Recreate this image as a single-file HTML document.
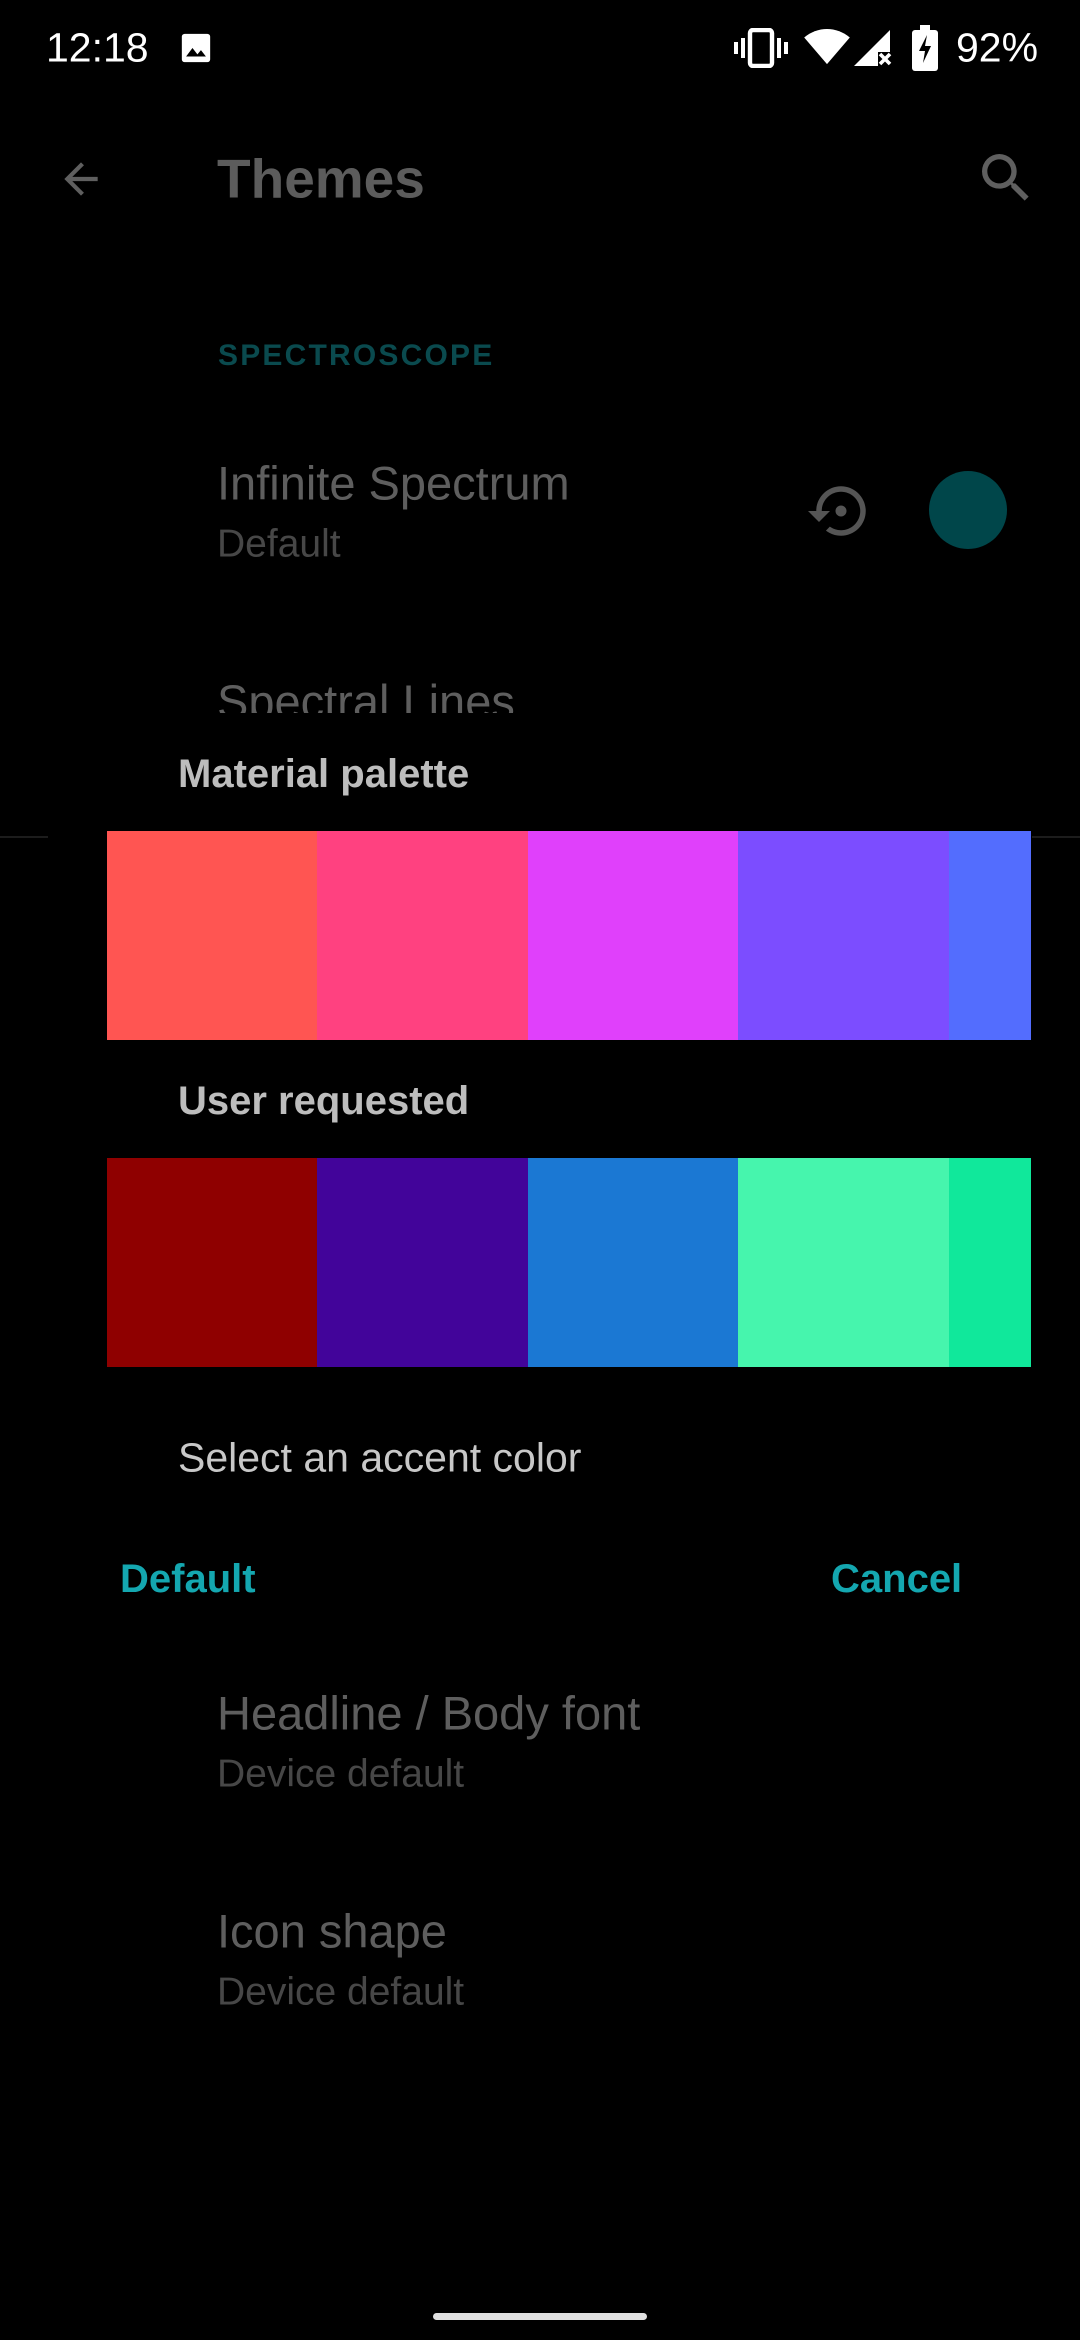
<!DOCTYPE html>
<html><head><meta charset="utf-8"><style>
html,body{margin:0;padding:0;background:#000;width:1080px;height:2340px;overflow:hidden;position:relative;font-family:"Liberation Sans",sans-serif}
.t{position:absolute;white-space:nowrap;line-height:1;transform:translateY(-50%)}
.sw{position:absolute;height:100%;top:0}
</style></head><body>
<!-- status bar -->
<div class="t" style="left:46px;top:48px;font-size:41px;color:#fff">12:18</div>
<svg style="position:absolute;left:178px;top:31px" width="36" height="34" viewBox="0 0 24 24"><rect x="2" y="2" width="20" height="20" rx="2" fill="#fff"/><path d="M5 18l4.5-6 3.5 4.5 2.5-3 3.5 4.5z" fill="#000"/></svg>
<svg style="position:absolute;left:734px;top:28px" width="54" height="40" viewBox="0 0 27 20"><rect x="8" y="1" width="11" height="18" rx="1.5" fill="none" stroke="#fff" stroke-width="2.2"/><rect x="3.5" y="5" width="2" height="10" fill="#fff"/><rect x="21.5" y="5" width="2" height="10" fill="#fff"/><rect x="0" y="7" width="2" height="6" fill="#fff"/><rect x="25" y="7" width="2" height="6" fill="#fff"/></svg>
<svg style="position:absolute;left:804px;top:28px" width="46" height="38" viewBox="0 0 24 20"><path d="M12 19L0 5C7-1 17-1 24 5z" fill="#fff"/></svg>
<svg style="position:absolute;left:852px;top:28px" width="40" height="40" viewBox="0 0 20 20"><path d="M19 1V12H13V19H1z" fill="#fff"/><path d="M14 13l5 5M19 13l-5 5" stroke="#fff" stroke-width="1.8"/></svg>
<svg style="position:absolute;left:912px;top:25px" width="26" height="46" viewBox="0 0 13 23"><rect x="4" y="0" width="5" height="3" fill="#fff"/><rect x="0" y="2.5" width="13" height="20.5" rx="1.5" fill="#fff"/><path d="M7.5 5L3.5 13H6.5L5.5 19L9.5 10.5H6.5z" fill="#000"/></svg>
<div class="t" style="left:956px;top:48px;font-size:41px;color:#fff">92%</div>
<!-- toolbar -->
<svg style="position:absolute;left:56px;top:154px" width="50" height="50" viewBox="0 0 24 24"><path d="M20 11H7.83l5.59-5.59L12 4l-8 8 8 8 1.41-1.41L7.83 13H20z" fill="#5f5f5f"/></svg>
<div class="t" style="left:217px;top:179px;font-size:55px;font-weight:bold;color:#5c5c5c">Themes</div>
<svg style="position:absolute;left:974px;top:146px" width="64" height="64" viewBox="0 0 24 24"><path d="M15.5 14h-.79l-.28-.27A6.47 6.47 0 0 0 16 9.5 6.5 6.5 0 1 0 9.5 16c1.61 0 3.09-.59 4.230-1.57l.27.28v.79l5 4.99L20.49 19l-4.99-5zm-6 0C7.01 14 5 11.99 5 9.5S7.01 5 9.5 5 14 7.01 14 9.5 11.99 14 9.5 14z" fill="#5f5f5f"/></svg>
<div class="t" style="left:218px;top:356px;font-size:30px;font-weight:bold;color:#0a4a4e;letter-spacing:2.2px">SPECTROSCOPE</div>
<div class="t" style="left:217px;top:483px;font-size:47px;color:#5e5e5e">Infinite Spectrum</div>
<div class="t" style="left:217px;top:544px;font-size:39px;color:#474747">Default</div>
<svg style="position:absolute;left:808px;top:478px" width="66" height="66" viewBox="0 0 24 24"><path d="M14 12c0-1.1-.9-2-2-2s-2 .9-2 2 .9 2 2 2 2-.9 2-2zm-2-9c-4.97 0-9 4.030-9 9H0l4 4 4-4H5c0-3.87 3.13-7 7-7s7 3.13 7 7-3.13 7-7 7c-1.51 0-2.91-.49-4.06-1.3l-1.42 1.44C8.04 20.3 9.94 21 12 21c4.97 0 9-4.03 9-9s-4.03-9-9-9z" fill="#555"/></svg>
<div style="position:absolute;left:929px;top:471px;width:78px;height:78px;border-radius:50%;background:#00464a"></div>
<div style="position:absolute;left:0;top:600px;width:1080px;height:113px;overflow:hidden"><div class="t" style="left:217px;top:78px;font-size:47px;color:#5e5e5e;transform:none">Spectral Lines</div></div>
<div style="position:absolute;left:0;top:836px;width:1080px;height:2px;background:#1c1c1c"></div>
<!-- dialog -->
<div style="position:absolute;left:48px;top:716px;width:984px;height:880px;background:#000"></div>
<div class="t" style="left:178px;top:774px;font-size:40px;font-weight:bold;color:#bdbdbd">Material palette</div>
<div style="position:absolute;left:107px;top:831px;width:924px;height:209px;overflow:hidden">
<div class="sw" style="left:0;width:210px;background:#ff5552"></div>
<div class="sw" style="left:210px;width:211px;background:#ff4180"></div>
<div class="sw" style="left:421px;width:210px;background:#e040fb"></div>
<div class="sw" style="left:631px;width:211px;background:#7c4dff"></div>
<div class="sw" style="left:842px;width:82px;background:#536dfe"></div></div>
<div class="t" style="left:178px;top:1101px;font-size:40px;font-weight:bold;color:#bdbdbd">User requested</div>
<div style="position:absolute;left:107px;top:1158px;width:924px;height:209px;overflow:hidden">
<div class="sw" style="left:0;width:210px;background:#8f0000"></div>
<div class="sw" style="left:210px;width:211px;background:#42049a"></div>
<div class="sw" style="left:421px;width:210px;background:#1b78d3"></div>
<div class="sw" style="left:631px;width:211px;background:#46f5ad"></div>
<div class="sw" style="left:842px;width:82px;background:#10e89b"></div></div>
<div class="t" style="left:178px;top:1458px;font-size:41px;color:#c8c8c8">Select an accent color</div>
<div class="t" style="left:120px;top:1579px;font-size:40px;font-weight:bold;color:#14a7b0">Default</div>
<div class="t" style="left:831px;top:1579px;font-size:40px;font-weight:bold;color:#14a7b0">Cancel</div>
<!-- below -->
<div class="t" style="left:217px;top:1713px;font-size:47px;color:#5e5e5e">Headline / Body font</div>
<div class="t" style="left:217px;top:1774px;font-size:39px;color:#474747">Device default</div>
<div class="t" style="left:217px;top:1931px;font-size:47px;color:#5e5e5e">Icon shape</div>
<div class="t" style="left:217px;top:1992px;font-size:39px;color:#474747">Device default</div>
<div style="position:absolute;left:433px;top:2313px;width:214px;height:7px;border-radius:4px;background:#e0e0e0"></div>
</body></html>
